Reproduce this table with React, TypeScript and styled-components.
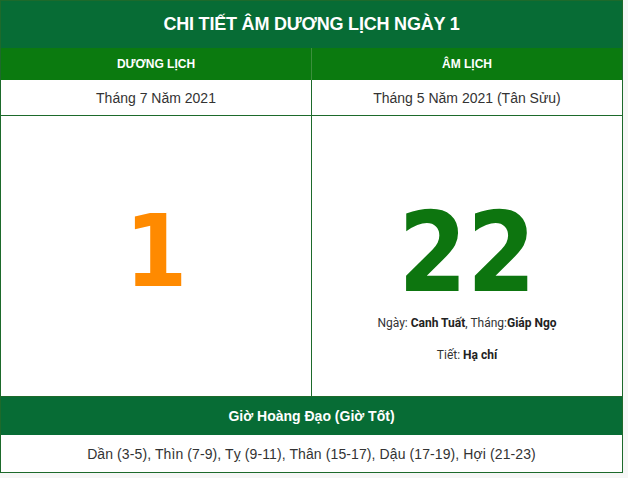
import React, { FC } from 'react';
import styled, { createGlobalStyle } from 'styled-components';

const GlobalStyle = createGlobalStyle`
  html, body {
    margin: 0;
    padding: 0;
    background: #f6f6f6;
  }
  body {
    font-family: 'Liberation Sans', Arial, sans-serif;
  }
`;

const Board = styled.div`
  width: 623px;
  box-sizing: border-box;
  border: 1px solid #1d6a2b;
  background: #fff;
`;

const Title = styled.div`
  height: 47px;
  display: flex;
  align-items: center;
  justify-content: center;
  background: #076c35;
  color: #fff;
  font-weight: bold;
  font-size: 18px;
  letter-spacing: -0.2px;
`;

const Row = styled.div`
  display: grid;
  grid-template-columns: 311px 1fr;
`;

const Cell = styled.div<{ $h: number; $head?: boolean; $left?: boolean }>`
  height: ${(p) => p.$h}px;
  display: flex;
  flex-direction: column;
  align-items: center;
  justify-content: center;
  box-sizing: border-box;
  border-right: ${(p) => (p.$left ? `1px solid ${p.$head ? '#3c8f3c' : '#1d6a2b'}` : 'none')};
  border-bottom: ${(p) => (p.$head ? 'none' : '1px solid #1d6a2b')};
  background: ${(p) => (p.$head ? '#0b7a0f' : '#fff')};
  color: ${(p) => (p.$head ? '#fff' : '#333')};
  font-size: ${(p) => (p.$head ? '12px' : '14px')};
  font-weight: ${(p) => (p.$head ? 'bold' : 'normal')};
`;

const BigCell = styled(Cell)`
  justify-content: flex-start;
`;

const Day = styled.div<{ $color: string; $size: number; $top: number }>`
  margin-top: ${(p) => p.$top}px;
  font-family: 'DejaVu Sans Condensed', 'DejaVu Sans', sans-serif;
  font-weight: bold;
  font-size: ${(p) => p.$size}px;
  line-height: 1;
  color: ${(p) => p.$color};
`;

const Info = styled.div<{ $top: number }>`
  margin-top: ${(p) => p.$top}px;
  font-family: Roboto, 'Liberation Sans', sans-serif;
  font-size: 12px;
  color: #333;
  b {
    font-weight: bold;
    color: #222;
  }
`;

const Band = styled.div`
  height: 38px;
  display: flex;
  align-items: center;
  justify-content: center;
  background: #076c35;
  color: #fff;
  font-weight: bold;
  font-size: 14px;
`;

const Hours = styled.div`
  height: 37px;
  display: flex;
  align-items: center;
  justify-content: center;
  color: #333;
  font-size: 14px;
  letter-spacing: 0.1px;
`;

const App: FC = () => {
  return (
    <>
      <GlobalStyle />
      <Board>
        <Title>CHI TIẾT ÂM DƯƠNG LỊCH NGÀY 1</Title>
        <Row>
          <Cell $h={32} $head $left>DƯƠNG LỊCH</Cell>
          <Cell $h={32} $head>ÂM LỊCH</Cell>
        </Row>
        <Row>
          <Cell $h={36} $left>Tháng 7 Năm 2021</Cell>
          <Cell $h={36}>Tháng 5 Năm 2021 (Tân Sửu)</Cell>
        </Row>
        <Row>
          <BigCell $h={281} $left>
            <Day $color="#ff8a00" $size={100} $top={86}>1</Day>
          </BigCell>
          <BigCell $h={281}>
            <Day $color="#0d750f" $size={110} $top={82}>22</Day>
            <Info $top={8}>
              Ngày: <b>Canh Tuất</b>, Tháng:<b>Giáp Ngọ</b>
            </Info>
            <Info $top={18}>
              Tiết: <b>Hạ chí</b>
            </Info>
          </BigCell>
        </Row>
        <Band>Giờ Hoàng Đạo (Giờ Tốt)</Band>
        <Hours>Dần (3-5), Thìn (7-9), Tỵ (9-11), Thân (15-17), Dậu (17-19), Hợi (21-23)</Hours>
      </Board>
    </>
  );
};

export default App;
